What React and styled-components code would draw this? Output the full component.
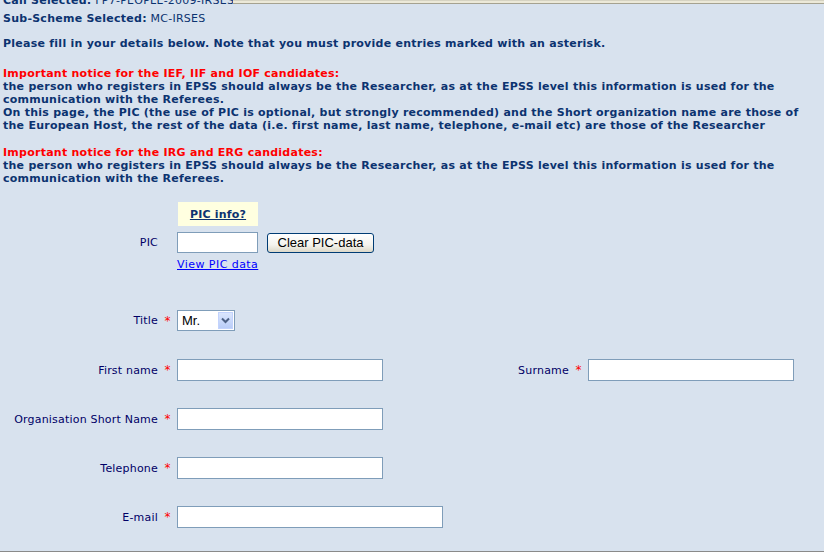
import styled, { createGlobalStyle } from "styled-components"

const GlobalStyle = createGlobalStyle`
    html, body {
        margin: 0;
        padding: 0;
        height: 552px;
        overflow: hidden;
        background: #d8e2ee;
        font-family: "DejaVu Sans", Verdana, sans-serif;
    }
`

const Page = styled.div`
    position: relative;
    height: 552px;
    box-sizing: border-box;
    border-bottom: 1px solid #8a8a8a;
    overflow: hidden;
`

const FrameEdge = styled.div`
    position: absolute;
    top: 0;
    left: 233px;
    right: 0;
    height: 4px;
    background: #ece9d8;
    border-top: 1px solid #d6d3c2;
    border-bottom: 1px solid #a5a290;
    box-sizing: border-box;
`

const Content = styled.div`
    padding-left: 3px;
    margin-top: -8px;
    color: #0c3370;
    font-size: 11px;
    letter-spacing: 0.25px;
`

const InfoLine = styled.div`
    line-height: 18px;
    white-space: nowrap;
    color: #0c3370;
`

const Strong = styled.b`
    font-weight: bold;
`

const Intro = styled.p`
    margin: 9px 0 0;
    font-weight: bold;
    line-height: 13px;
    white-space: nowrap;
`

const Notice = styled.p`
    margin: ${(p) => p.$top}px 0 0;
    font-weight: bold;
    line-height: 13px;
    white-space: nowrap;
`

const NoticeTitle = styled.span`
    color: #ff0000;
`

const Form = styled.div`
    margin-top: 17px;
    display: flex;
    flex-direction: column;
    letter-spacing: 0.2px;
`

const Row = styled.div`
    display: flex;
    align-items: center;
    margin-top: ${(p) => p.$top || 0}px;
`

const Label = styled.div`
    width: ${(p) => p.$width || 155}px;
    text-align: right;
    color: #000066;
    font-size: 11px;
    white-space: nowrap;
    flex-shrink: 0;
`

const Star = styled.span`
    width: 19px;
    flex-shrink: 0;
    text-align: center;
    color: #ff0000;
    font-size: 12px;
    line-height: 12px;
`

const TextInput = styled.input`
    box-sizing: border-box;
    width: ${(p) => p.$width || 206}px;
    height: ${(p) => p.$height || 22}px;
    border: 1px solid #7f9db9;
    background: #ffffff;
    padding: 0 3px;
    margin: 0;
    font-family: "Liberation Sans", Arial, sans-serif;
    font-size: 13px;
    flex-shrink: 0;
`

const InfoBox = styled.div`
    width: 80px;
    height: 24px;
    background: #ffffe0;
    display: flex;
    align-items: center;
    justify-content: center;
`

const InfoLink = styled.a`
    color: #0c3370;
    font-weight: bold;
    font-size: 11px;
    text-decoration: underline;
`

const Button = styled.button`
    box-sizing: border-box;
    margin-left: 9px;
    width: 107px;
    height: 20px;
    padding: 0;
    border: 1px solid #003c74;
    border-radius: 3px;
    background: linear-gradient(#ffffff, #f4f3ee 60%, #dcd8c8);
    font-family: "Liberation Sans", Arial, sans-serif;
    font-size: 13px;
    letter-spacing: 0;
    color: #000000;
`

const ViewLink = styled.a`
    color: #0000ff;
    font-size: 11px;
    letter-spacing: 0.45px;
    text-decoration: underline;
    line-height: 13px;
`

const SelectBox = styled.div`
    position: relative;
    box-sizing: border-box;
    width: 58px;
    height: 21px;
    border: 1px solid #7f9db9;
    background: #ffffff;
    display: flex;
    align-items: center;
`

const SelectText = styled.span`
    padding-left: 4px;
    font-family: "Liberation Sans", Arial, sans-serif;
    font-size: 13px;
    letter-spacing: 0;
    color: #000000;
`

const SelectArrow = styled.span`
    position: absolute;
    right: 1px;
    top: 1px;
    width: 15px;
    height: 17px;
    background: linear-gradient(#dbe6fd, #b9cdf8);
    border: 1px solid #c3d3fd;
    box-sizing: border-box;
    display: flex;
    align-items: center;
    justify-content: center;
`

const Spacer = styled.div`
    width: ${(p) => p.$width}px;
    flex-shrink: 0;
`

const App = () => {
  return (
    <Page>
      <GlobalStyle />
      <Content>
        <InfoLine><Strong>Call Selected:</Strong> FP7-PEOPLE-2009-IRSES</InfoLine>
        <InfoLine><Strong>Sub-Scheme Selected:</Strong> MC-IRSES</InfoLine>
        <Intro>Please fill in your details below. Note that you must provide entries marked with an asterisk.</Intro>
        <Notice $top={17}>
          <NoticeTitle>Important notice for the IEF, IIF and IOF candidates:</NoticeTitle><br />
          the person who registers in EPSS should always be the Researcher, as at the EPSS level this information is used for the<br />
          communication with the Referees.<br />
          On this page, the PIC (the use of PIC is optional, but strongly recommended) and the Short organization name are those of<br />
          the European Host, the rest of the data (i.e. first name, last name, telephone, e-mail etc) are those of the Researcher
        </Notice>
        <Notice $top={14}>
          <NoticeTitle>Important notice for the IRG and ERG candidates:</NoticeTitle><br />
          the person who registers in EPSS should always be the Researcher, as at the EPSS level this information is used for the<br />
          communication with the Referees.
        </Notice>

        <Form>
          <Row>
            <Spacer $width={175} />
            <InfoBox><InfoLink>PIC info?</InfoLink></InfoBox>
          </Row>
          <Row $top={6}>
            <Label>PIC</Label>
            <Star />
            <TextInput $width={81} $height={21} />
            <Button>Clear PIC-data</Button>
          </Row>
          <Row $top={5}>
            <Spacer $width={174} />
            <ViewLink>View PIC data</ViewLink>
          </Row>
          <Row $top={39}>
            <Label>Title</Label>
            <Star>*</Star>
            <SelectBox>
              <SelectText>Mr.</SelectText>
              <SelectArrow>
                <svg width="9" height="7" viewBox="0 0 9 7">
                  <path d="M1 1.5 L4.5 5 L8 1.5" fill="none" stroke="#4d6185" strokeWidth="2" />
                </svg>
              </SelectArrow>
            </SelectBox>
          </Row>
          <Row $top={28}>
            <Label>First name</Label>
            <Star>*</Star>
            <TextInput />
            <Label $width={186}>Surname</Label>
            <Star>*</Star>
            <TextInput />
          </Row>
          <Row $top={27}>
            <Label>Organisation Short Name</Label>
            <Star>*</Star>
            <TextInput />
          </Row>
          <Row $top={27}>
            <Label>Telephone</Label>
            <Star>*</Star>
            <TextInput />
          </Row>
          <Row $top={27}>
            <Label>E-mail</Label>
            <Star>*</Star>
            <TextInput $width={266} />
          </Row>
        </Form>
      </Content>
      <FrameEdge />
    </Page>
  )
}

export default App
